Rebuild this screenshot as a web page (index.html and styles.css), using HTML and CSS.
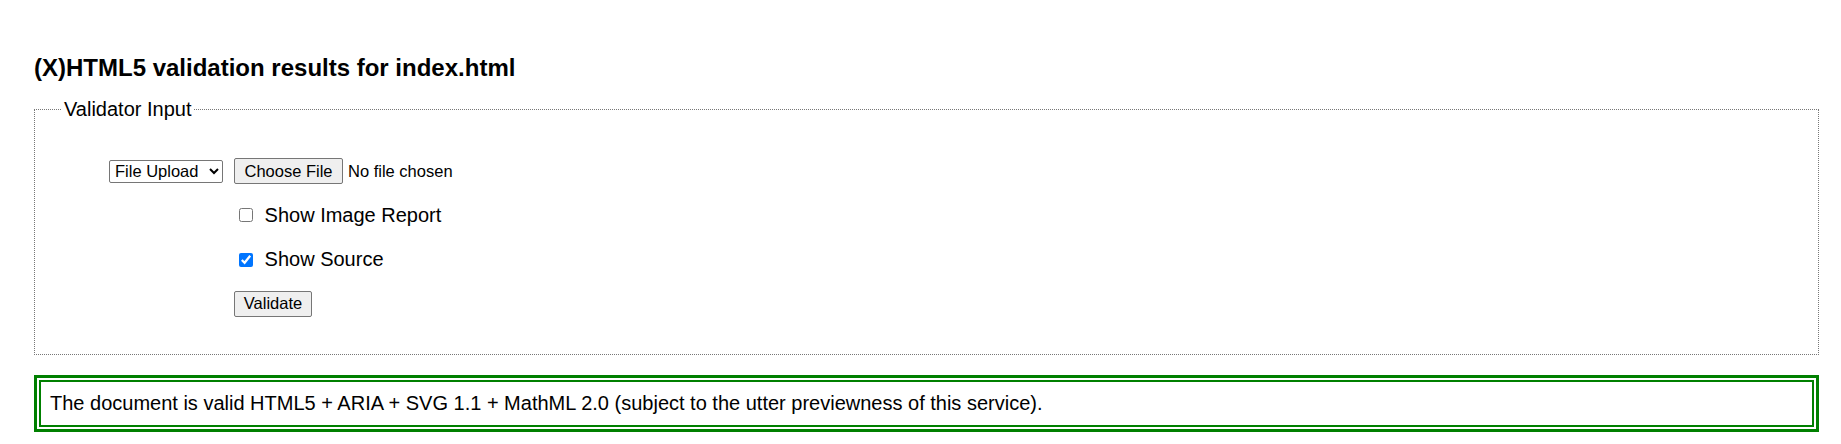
FILE: index.html
```html
<!DOCTYPE html>
<html lang="en">
<head>
<meta charset="utf-8">
<title>Validation results</title>
<link rel="stylesheet" href="styles.css">
</head>
<body>
<div class="page">
  <h2 class="title">(X)HTML5 validation results for index.html</h2>
  <form class="validator-form">
    <fieldset class="input-set">
      <legend class="input-legend">Validator Input</legend>
      <div class="form-grid">
        <div class="cell-type">
          <select class="type-select">
            <option>File Upload</option>
            <option>Address</option>
            <option>Text Field</option>
          </select>
        </div>
        <div class="cell-input">
          <input type="file" class="file-input">
        </div>
        <label class="cell-opt"><input type="checkbox" class="opt-check"> Show Image Report</label>
        <label class="cell-opt"><input type="checkbox" class="opt-check" checked> Show Source</label>
        <div class="cell-opt">
          <button type="button" class="btn btn-validate">Validate</button>
        </div>
      </div>
    </fieldset>
  </form>
  <div class="success-box">
    <p class="success">The document is valid HTML5 + ARIA + SVG 1.1 + MathML 2.0 (subject to the utter previewness of this service).</p>
  </div>
</div>
</body>
</html>
```
FILE: styles.css
```css
html, body {
  margin: 0;
  padding: 0;
  background: #ffffff;
}

body {
  font-family: "Liberation Sans", Arial, sans-serif;
  font-size: 20px;
  color: #000000;
}

.page {
  padding: 0 22px 0 34px;
}

.title {
  margin: 54px 0 16px;
  font-size: 24px;
  line-height: 28px;
  font-weight: 700;
}

.validator-form {
  margin: 0;
}

.input-set {
  margin: 0;
  padding: 0 0 37px 0;
  border: 1px dotted #777777;
  min-width: 0;
}

.input-legend {
  margin-left: 27px;
  padding: 0 2px;
  font-size: 20px;
  line-height: 22px;
}

.form-grid {
  display: grid;
  grid-template-columns: 199px 1fr;
  grid-template-rows: repeat(4, 26px);
  row-gap: 18.3px;
  margin-top: 38px;
}

.cell-type {
  display: flex;
  align-items: center;
  justify-content: flex-end;
  padding-right: 11px;
}

.cell-input {
  display: flex;
  align-items: center;
}

.cell-opt {
  grid-column: 2;
  display: flex;
  align-items: center;
  font-size: 20px;
  white-space: pre;
}

.type-select {
  width: 114px;
  height: 23px;
  margin: 0;
  padding: 0 1px;
  font-family: "Liberation Sans", Arial, sans-serif;
  font-size: 16.5px;
  color: #000;
  background: #ffffff;
  border: 1px solid #767676;
  border-radius: 2px;
}

.file-input {
  margin: 0;
  font-family: "Liberation Sans", Arial, sans-serif;
  font-size: 16.5px;
  color: #000;
}

.file-input::file-selector-button {
  width: 109px;
  height: 26px;
  margin: 0 5px 0 0;
  padding: 0;
  font: inherit;
  color: #000;
  background: #efefef;
  border: 1px solid #767676;
  border-radius: 2px;
}

.opt-check {
  width: 14px;
  height: 14px;
  margin: 0 6px 0 5px;
}

.btn {
  font-family: "Liberation Sans", Arial, sans-serif;
  font-size: 16.5px;
  color: #000;
  background: #efefef;
  border: 1px solid #767676;
  border-radius: 2px;
  padding: 0;
  margin: 0;
}

.btn-validate {
  width: 78px;
  height: 26px;
}

.success-box {
  margin-top: 20px;
  padding: 2px;
  border: 3px solid #008000;
}

.success {
  margin: 0;
  padding: 10px 9px;
  border: 2px solid #008000;
  font-size: 20px;
  line-height: 23px;
}
```
